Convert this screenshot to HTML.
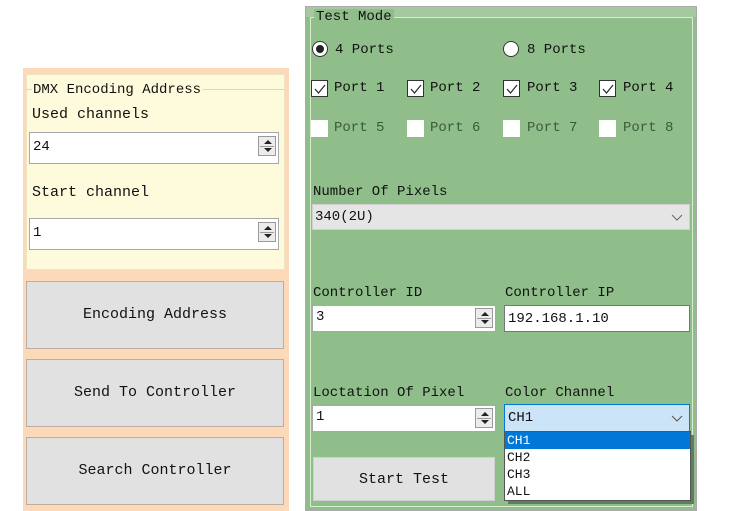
<!DOCTYPE html><html><head><style>
*{box-sizing:border-box;margin:0;padding:0}
body{width:748px;height:511px;background:#fff;position:relative;overflow:hidden;font-family:"Liberation Mono","Noto Sans CJK SC",monospace;font-size:14px;color:#111}
.a{position:absolute}
.t{position:absolute;white-space:nowrap;line-height:16px}
.inp{position:absolute;background:#fff;border:1px solid #a8a8a8;padding:2px 3px;font-size:14px;line-height:18px}
.spin{position:absolute;right:2px;top:3px;width:18px;height:20px;border:1px solid #9a9a9a;background:#ececec}
.spin:before{content:"";position:absolute;left:5px;top:3px;border:4px solid transparent;border-bottom:4px solid #222;border-top:0}
.spin:after{content:"";position:absolute;left:5px;bottom:3px;border:4px solid transparent;border-top:4px solid #222;border-bottom:0}
.spin i{position:absolute;left:1px;right:1px;top:9px;height:1px;background:#999}
.btn{position:absolute;background:#e1e1e1;border:1px solid #bcaea0;text-align:center;font-size:15px}
.cb{position:absolute;width:17px;height:17px;background:#fff;border:1px solid #333}
.cb.d{border:1px solid #fff}
.cb svg{position:absolute;left:1px;top:1px}
.chev{position:absolute;right:6px;top:6px}
</style></head><body>
<div class="a" style="left:23px;top:68px;width:266px;height:443px;background:#fbd9b9"></div>
<div class="a" style="left:26px;top:74px;width:259px;height:196px;background:#fdfbdc;border:1px solid #eee4c0"></div>
<div class="a" style="left:26px;top:89px;width:258px;height:1px;background:#d8d8c8"></div>
<div class="t" style="left:32px;top:82px;background:#fdfbdc;padding:0 2px 0 1px">DMX Encoding Address</div>
<div class="t" style="left:32px;top:107px;font-size:15px">Used channels</div>
<div class="inp" style="left:29px;top:132px;width:250px;height:32px;padding-top:5px">24<div class="spin"><i></i></div></div>
<div class="t" style="left:32px;top:185px;font-size:15px">Start channel</div>
<div class="inp" style="left:29px;top:218px;width:250px;height:32px;padding-top:5px">1<div class="spin"><i></i></div></div>
<div class="btn" style="left:26px;top:281px;width:258px;height:68px;line-height:66px">Encoding Address</div>
<div class="btn" style="left:26px;top:359px;width:258px;height:68px;line-height:66px">Send To Controller</div>
<div class="btn" style="left:26px;top:437px;width:258px;height:68px;line-height:66px">Search Controller</div>
<div class="a" style="left:305px;top:6px;width:392px;height:505px;background:#8fbe8a;border:1px solid #aaa"></div>
<div class="a" style="left:306px;top:7px;width:390px;height:10px;background:#a5c8a0"></div>
<div class="a" style="left:310px;top:17px;width:383px;height:490px;border:1px solid #d8ecd4"></div>
<div class="t" style="left:314px;top:9px;background:#8fbe8a;padding:0 2px">Test Mode</div>
<div class="a" style="left:312px;top:41px;width:16px;height:16px;border-radius:50%;background:#fff;border:1px solid #333"><div class="a" style="left:3px;top:3px;width:8px;height:8px;border-radius:50%;background:#222"></div></div>
<div class="t" style="left:335px;top:42px">4 Ports</div>
<div class="a" style="left:503px;top:41px;width:16px;height:16px;border-radius:50%;background:#fff;border:1px solid #333"></div>
<div class="t" style="left:527px;top:42px">8 Ports</div>
<div class="cb" style="left:311px;top:80px"><svg width="14" height="14"><path d="M2 7 L5.5 11 L12 3" stroke="#333" stroke-width="1.3" fill="none"/></svg></div>
<div class="t" style="left:334px;top:80px">Port 1</div>
<div class="cb" style="left:407px;top:80px"><svg width="14" height="14"><path d="M2 7 L5.5 11 L12 3" stroke="#333" stroke-width="1.3" fill="none"/></svg></div>
<div class="t" style="left:430px;top:80px">Port 2</div>
<div class="cb" style="left:503px;top:80px"><svg width="14" height="14"><path d="M2 7 L5.5 11 L12 3" stroke="#333" stroke-width="1.3" fill="none"/></svg></div>
<div class="t" style="left:527px;top:80px">Port 3</div>
<div class="cb" style="left:599px;top:80px"><svg width="14" height="14"><path d="M2 7 L5.5 11 L12 3" stroke="#333" stroke-width="1.3" fill="none"/></svg></div>
<div class="t" style="left:623px;top:80px">Port 4</div>
<div class="cb d" style="left:311px;top:120px"></div><div class="t" style="left:334px;top:120px;color:#3c5a3a">Port 5</div>
<div class="cb d" style="left:407px;top:120px"></div><div class="t" style="left:430px;top:120px;color:#3c5a3a">Port 6</div>
<div class="cb d" style="left:503px;top:120px"></div><div class="t" style="left:527px;top:120px;color:#3c5a3a">Port 7</div>
<div class="cb d" style="left:599px;top:120px"></div><div class="t" style="left:623px;top:120px;color:#3c5a3a">Port 8</div>
<div class="t" style="left:313px;top:184px">Number Of Pixels</div>
<div class="a" style="left:312px;top:204px;width:378px;height:26px;background:#e5e5e5;border:1px solid #d0d0d0;padding:4px 2px;line-height:16px">340(2U)<svg class="chev" width="12" height="12"><path d="M1 4 L6 9 L11 4" stroke="#666" fill="none"/></svg></div>
<div class="t" style="left:313px;top:285px">Controller ID</div>
<div class="t" style="left:505px;top:285px">Controller IP</div>
<div class="inp" style="left:312px;top:305px;width:184px;height:27px">3<div class="spin" style="top:2px"><i></i></div></div>
<div class="inp" style="left:504px;top:305px;width:186px;height:27px;border-color:#777;padding-top:4px">192.168.1.10</div>
<div class="t" style="left:313px;top:385px">Loctation Of Pixel</div>
<div class="t" style="left:505px;top:385px">Color Channel</div>
<div class="inp" style="left:312px;top:405px;width:184px;height:27px">1<div class="spin" style="top:2px"><i></i></div></div>
<div class="a" style="left:504px;top:404px;width:186px;height:28px;background:#cce4f7;border:1px solid #0078d7;padding:5px 3px;line-height:16px">CH1<svg class="chev" style="top:7px" width="12" height="12"><path d="M1 4 L6 9 L11 4" stroke="#555" fill="none"/></svg></div>
<div class="a" style="left:508px;top:435px;width:186px;height:69px;background:#5f7e5d"></div>
<div class="a" style="left:504px;top:431px;width:187px;height:70px;background:#fff;border:1px solid #555;font-size:13px;line-height:17px">
<div style="background:#0078d7;color:#fff;padding-left:2px">CH1</div><div style="padding-left:2px">CH2</div><div style="padding-left:2px">CH3</div><div style="padding-left:2px">ALL</div></div>
<div class="btn" style="left:313px;top:457px;width:182px;height:44px;line-height:44px;border-color:#cfcfcf">Start Test</div>
</body></html>
